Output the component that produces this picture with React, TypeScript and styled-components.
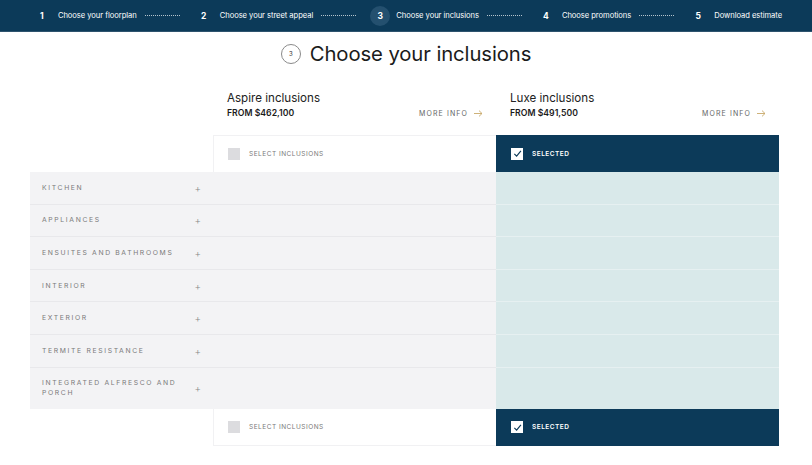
import React from "react";
import styled, { createGlobalStyle } from "styled-components";

const Global = createGlobalStyle`
  html, body { margin: 0; padding: 0; background: #fff; }
  body { font-family: Inter, "Liberation Sans", Arial, sans-serif; color: #222; }
  * { box-sizing: border-box; }
`;

const NAVY = "#0c3a59";

const Nav = styled.nav`
  height: 32px;
  background: ${NAVY};
  border-bottom: 1px solid #2d536e;
  display: flex;
  align-items: center;
  justify-content: center;
  padding-left: 2px;
`;

const Step = styled.div`
  display: flex;
  align-items: center;
  gap: 10px;
  color: #fff;
  font-size: 7.6px;
  letter-spacing: -0.05px;
`;

const StepNum = styled.span<{ $active?: boolean }>`
  width: 20px;
  height: 20px;
  border-radius: 50%;
  display: flex;
  align-items: center;
  justify-content: center;
  font-weight: 700;
  font-size: 8.5px;
  background: ${(p) => (p.$active ? "#24506f" : "transparent")};
  margin-right: -4px;
`;

const Dots = styled.span`
  width: 35px;
  border-bottom: 1px dotted rgba(255, 255, 255, 0.7);
  margin: 0 14px 0 8px;
  height: 1px;
`;

const Title = styled.h1`
  margin: 0;
  height: 42px;
  display: flex;
  align-items: center;
  justify-content: center;
  gap: 9px;
  font-weight: 400;
  font-size: 20.3px;
  color: #1b1b1b;
  letter-spacing: -0.1px;
`;

const TitleCircle = styled.span`
  width: 20px;
  height: 20px;
  border: 1px solid #8a8a8a;
  border-radius: 50%;
  display: inline-flex;
  align-items: center;
  justify-content: center;
  font-size: 6px;
  color: #333;
  margin-top: 1px;
`;

const Table = styled.div`
  margin: 0 0 0 30px;
  width: 749px;
  display: grid;
  grid-template-columns: 183px 283px 283px;
`;

const Blank = styled.div``;

const Head = styled.div`
  padding: 17px 13px 0 14px;
  height: 61px;
`;

const HeadName = styled.div`
  font-size: 11.6px;
  color: #222;
  font-weight: 400;
`;

const HeadLine = styled.div`
  display: flex;
  justify-content: space-between;
  align-items: center;
  margin-top: 3px;
`;

const Price = styled.span`
  font-size: 8.7px;
  font-weight: 600;
  color: #1b1b1b;
`;

const More = styled.span`
  font-size: 7px;
  letter-spacing: 1.1px;
  color: #666;
  display: flex;
  align-items: center;
  gap: 6px;
`;

const SelectCell = styled.div<{ $on?: boolean; $bottom?: boolean }>`
  height: 37px;
  display: flex;
  align-items: center;
  gap: 9px;
  padding-left: ${(p) => (p.$on ? "15px" : "14px")};
  background: ${(p) => (p.$on ? NAVY : "#fff")};
  border-left: ${(p) => (p.$on ? "none" : "1px solid #f1f1f3")};
  border-top: ${(p) => (p.$on ? "none" : p.$bottom ? "none" : "1px solid #f1f1f3")};
  border-bottom: ${(p) => (p.$on ? "none" : p.$bottom ? "1px solid #f1f1f3" : "none")};
`;

const Box = styled.span<{ $on?: boolean }>`
  width: 12px;
  height: 12px;
  background: ${(p) => (p.$on ? "#fff" : "#dcdcdf")};
  display: flex;
  align-items: center;
  justify-content: center;
`;

const SelectLabel = styled.span<{ $on?: boolean }>`
  font-size: 6.5px;
  letter-spacing: 0.5px;
  color: ${(p) => (p.$on ? "#fff" : "#7a7a7a")};
  font-weight: ${(p) => (p.$on ? 600 : 400)};
`;

const Cell = styled.div<{ $tall?: boolean; $kind: "label" | "grey" | "luxe"; $last?: boolean }>`
  height: ${(p) => (p.$tall ? "41px" : "32.6px")};
  background: ${(p) => (p.$kind === "luxe" ? "#d9e9ea" : "#f3f3f5")};
  border-bottom: ${(p) =>
    p.$last ? "none" : p.$kind === "luxe" ? "1px solid #e6f0f1" : "1px solid #e8e8eb"};
  display: flex;
  align-items: center;
  justify-content: space-between;
  padding: ${(p) => (p.$kind === "label" ? "0 12px 0 12px" : "0")};
`;

const CatLabel = styled.span`
  font-size: 6.8px;
  letter-spacing: 1.65px;
  color: #7a7a7a;
  line-height: 10px;
  max-width: 150px;
`;

const Plus = styled.span`
  font-size: 10px;
  color: #888;
  font-weight: 300;
`;

const Check = () => (
  <svg width="9" height="9" viewBox="0 0 10 10">
    <path d="M1.5 5.5 L4 8 L8.8 2" fill="none" stroke="#0c3a59" strokeWidth="1.3" />
  </svg>
);

const Arrow = () => (
  <svg width="9" height="7" viewBox="0 0 9 7">
    <path d="M0 3.5 H8 M5 0.6 L8 3.5 L5 6.4" fill="none" stroke="#c8a96a" strokeWidth="0.9" />
  </svg>
);

const steps = [
  "Choose your floorplan",
  "Choose your street appeal",
  "Choose your inclusions",
  "Choose promotions",
  "Download estimate",
];

const cats = [
  "KITCHEN",
  "APPLIANCES",
  "ENSUITES AND BATHROOMS",
  "INTERIOR",
  "EXTERIOR",
  "TERMITE RESISTANCE",
  "INTEGRATED ALFRESCO AND PORCH",
];

const packs = [
  { name: "Aspire inclusions", price: "FROM $462,100", on: false },
  { name: "Luxe inclusions", price: "FROM $491,500", on: true },
];

const SelectRow = ({ bottom }: { bottom?: boolean }) => (
  <>
    <Blank />
    {packs.map((p) => (
      <SelectCell key={p.name} $on={p.on} $bottom={bottom}>
        <Box $on={p.on}>{p.on && <Check />}</Box>
        <SelectLabel $on={p.on}>{p.on ? "SELECTED" : "SELECT INCLUSIONS"}</SelectLabel>
      </SelectCell>
    ))}
  </>
);

export default function App() {
  return (
    <>
      <Global />
      <Nav>
        {steps.map((s, i) => (
          <React.Fragment key={s}>
            <Step>
              <StepNum $active={i === 2}>{i + 1}</StepNum>
              <span>{s}</span>
            </Step>
            {i < steps.length - 1 && <Dots />}
          </React.Fragment>
        ))}
      </Nav>
      <Title>
        <TitleCircle>3</TitleCircle>
        Choose your inclusions
      </Title>
      <Table>
        <Blank />
        {packs.map((p) => (
          <Head key={p.name}>
            <HeadName>{p.name}</HeadName>
            <HeadLine>
              <Price>{p.price}</Price>
              <More>
                MORE INFO <Arrow />
              </More>
            </HeadLine>
          </Head>
        ))}
        <SelectRow />
        {cats.map((c, i) => {
          const tall = i === cats.length - 1;
          return (
            <React.Fragment key={c}>
              <Cell $kind="label" $tall={tall} $last={tall}>
                <CatLabel>{c}</CatLabel>
                <Plus>+</Plus>
              </Cell>
              <Cell $kind="grey" $tall={tall} $last={tall} />
              <Cell $kind="luxe" $tall={tall} $last={tall} />
            </React.Fragment>
          );
        })}
        <SelectRow bottom />
      </Table>
    </>
  );
}
